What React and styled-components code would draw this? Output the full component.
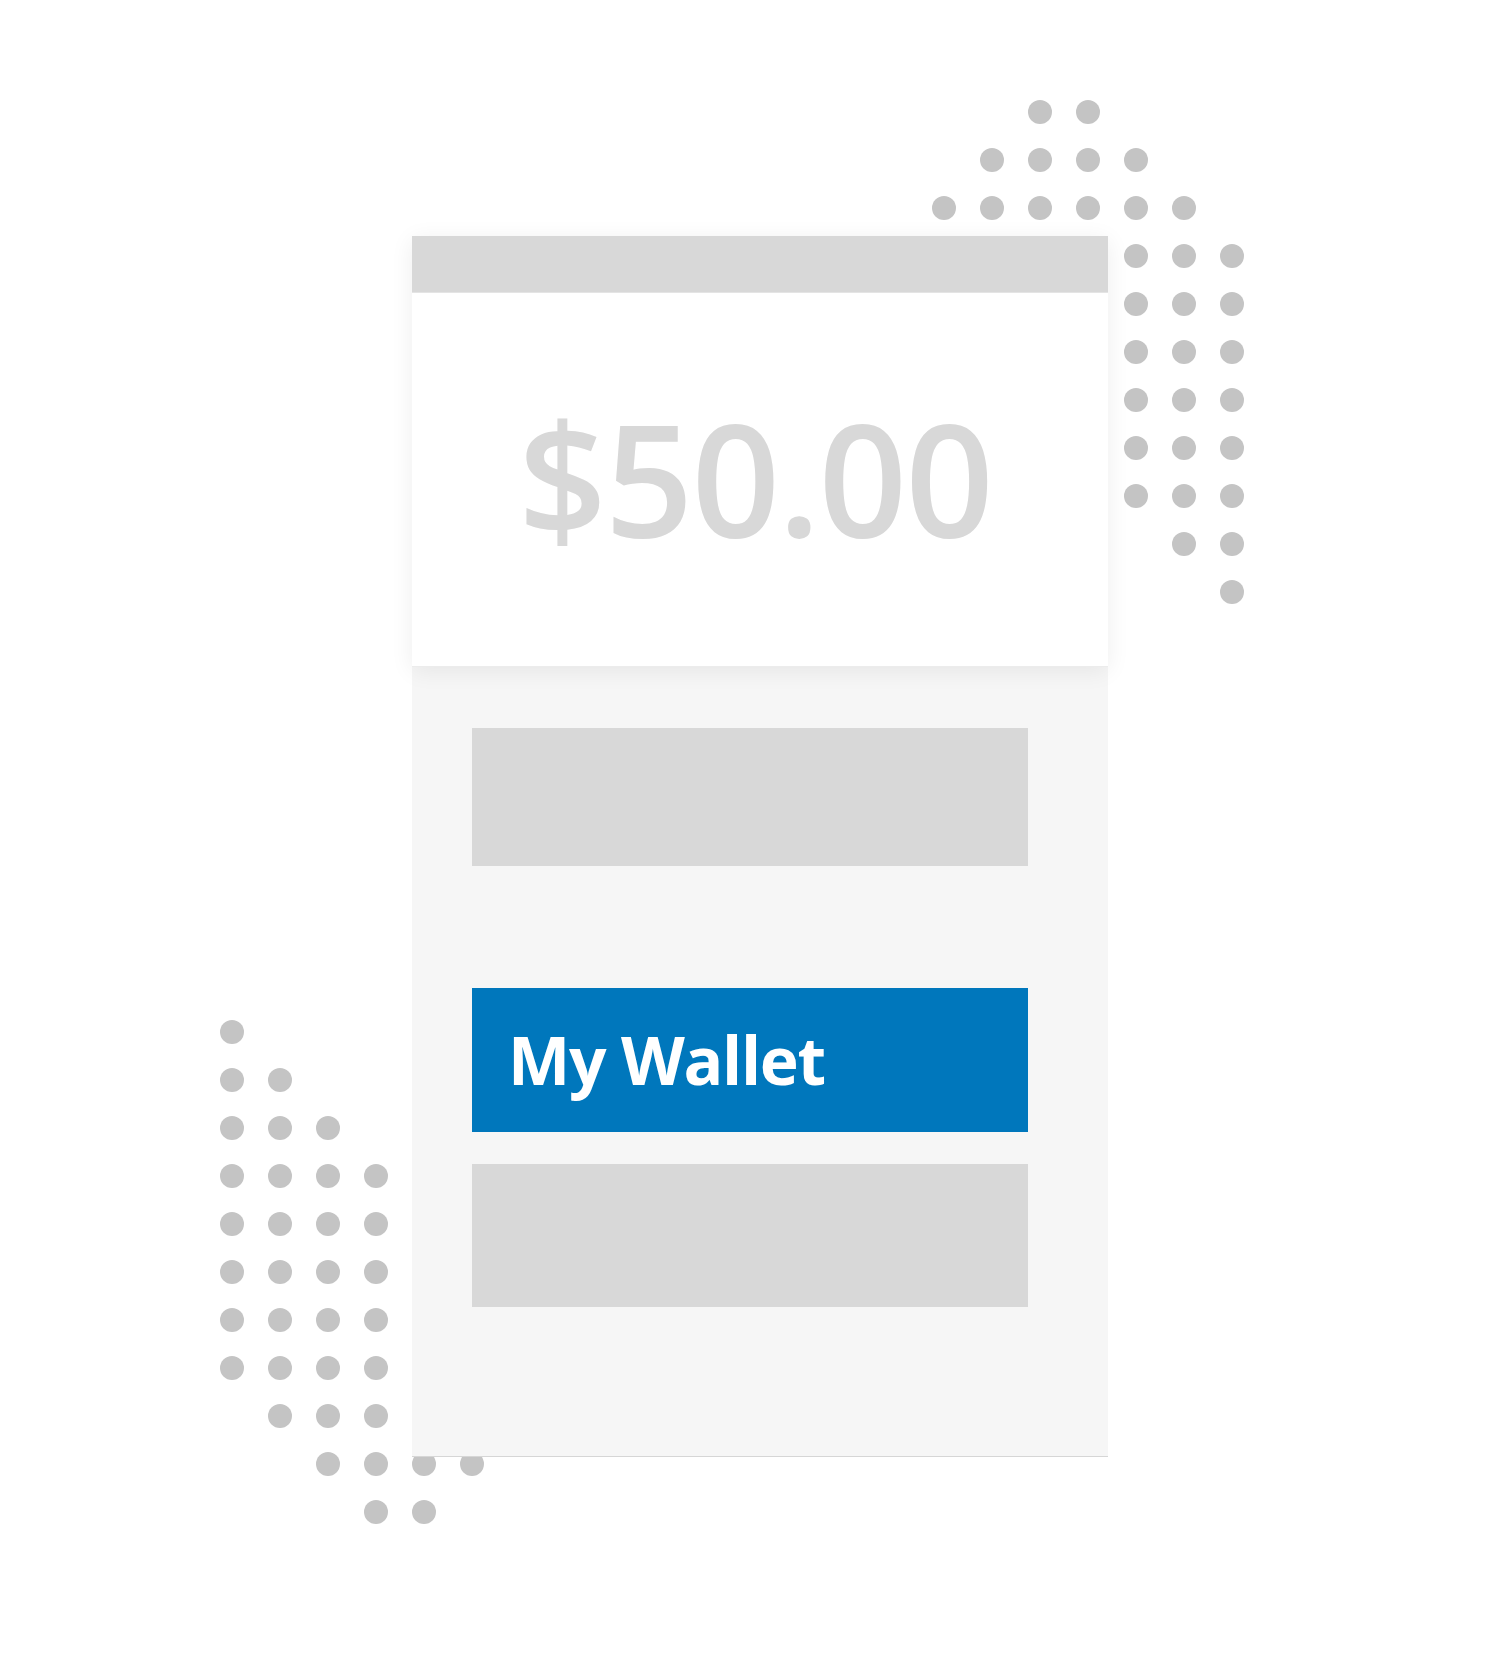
import React from "react";
import styled, { createGlobalStyle } from "styled-components";

const GlobalStyle = createGlobalStyle`
  html, body {
    margin: 0;
    padding: 0;
    background: #fff;
  }
  body {
    font-family: "Open Sans", "Liberation Sans", sans-serif;
  }
`;

const Stage = styled.div`
  position: relative;
  width: 1500px;
  height: 1680px;
  padding: 236px 0 0 412px;
  box-sizing: border-box;
  overflow: hidden;
`;

// decorative dot grids, sit under the card
const DotField = styled.div`
  position: absolute;
  top: ${(p) => p.top}px;
  left: ${(p) => p.left}px;
  display: grid;
  grid-template-columns: repeat(${(p) => p.cols}, 48px);
  grid-auto-rows: 48px;
  z-index: 0;
`;

const Cell = styled.div`
  display: flex;
  align-items: center;
  justify-content: center;
`;

const Dot = styled.span`
  width: 24px;
  height: 24px;
  border-radius: 50%;
  background: #c4c4c4;
`;

const Card = styled.div`
  position: relative;
  z-index: 1;
  width: 696px;
  height: 1220px;
  background: #f6f6f6;
  border-bottom: 1px solid #d6d6d6;
  display: flex;
  flex-direction: column;
`;

const TopPanel = styled.div`
  position: relative;
  z-index: 2;
  background: #fff;
  box-shadow: 0 4px 22px rgba(0, 0, 0, 0.07);
  border-bottom: 1px solid #ececec;
`;

const HeaderBar = styled.div`
  height: 56px;
  background: #d8d8d8;
  border-bottom: 1px solid #e4e4e4;
`;

const AmountArea = styled.div`
  height: 373px;
  display: flex;
  align-items: center;
  justify-content: center;
  padding-right: 10px;
`;

const Amount = styled.div`
  font-family: "Open Sans", "Liberation Sans", sans-serif;
  font-size: 155px;
  font-weight: 600;
  color: #d8d8d8;
  line-height: 1;
  letter-spacing: -2px;
  margin-top: -6px;
`;

const Body = styled.div`
  flex: 1;
  display: flex;
  flex-direction: column;
  padding: 61px 80px 0 60px;
`;

const Block = styled.div`
  height: ${(p) => p.h}px;
  margin-top: ${(p) => p.gap || 0}px;
  background: #d8d8d8;
`;

const WalletBar = styled.div`
  height: 144px;
  margin-top: 122px;
  background: #0077bc;
  display: flex;
  align-items: center;
  padding-left: 36px;
`;

const WalletLabel = styled.span`
  font-family: "Open Sans", "Liberation Sans", sans-serif;
  font-weight: 700;
  font-size: 66px;
  color: #fff;
  letter-spacing: -1.3px;
  margin-top: -2px;
`;

const topRight = [
  [2, 3],
  [1, 2, 3, 4],
  [0, 1, 2, 3, 4, 5],
  [4, 5, 6],
  [4, 5, 6],
  [4, 5, 6],
  [4, 5, 6],
  [4, 5, 6],
  [4, 5, 6],
  [5, 6],
  [6],
];

const bottomLeft = [
  [0],
  [0, 1],
  [0, 1, 2],
  [0, 1, 2, 3],
  [0, 1, 2, 3],
  [0, 1, 2, 3],
  [0, 1, 2, 3],
  [0, 1, 2, 3],
  [1, 2, 3],
  [2, 3, 4, 5],
  [3, 4],
];

function Dots({ rows, cols, top, left }) {
  return (
    <DotField top={top} left={left} cols={cols}>
      {rows.map((row, r) =>
        Array.from({ length: cols }, (_, c) => (
          <Cell key={`${r}-${c}`}>{row.includes(c) ? <Dot /> : null}</Cell>
        ))
      )}
    </DotField>
  );
}

export default function App() {
  return (
    <>
      <GlobalStyle />
      <Stage>
        <Dots rows={topRight} cols={7} top={88} left={920} />
        <Dots rows={bottomLeft} cols={6} top={1008} left={208} />
        <Card>
          <TopPanel>
            <HeaderBar />
            <AmountArea>
              <Amount>$50.00</Amount>
            </AmountArea>
          </TopPanel>
          <Body>
            <Block h={138} />
            <WalletBar>
              <WalletLabel>My Wallet</WalletLabel>
            </WalletBar>
            <Block h={143} gap={32} />
          </Body>
        </Card>
      </Stage>
    </>
  );
}
